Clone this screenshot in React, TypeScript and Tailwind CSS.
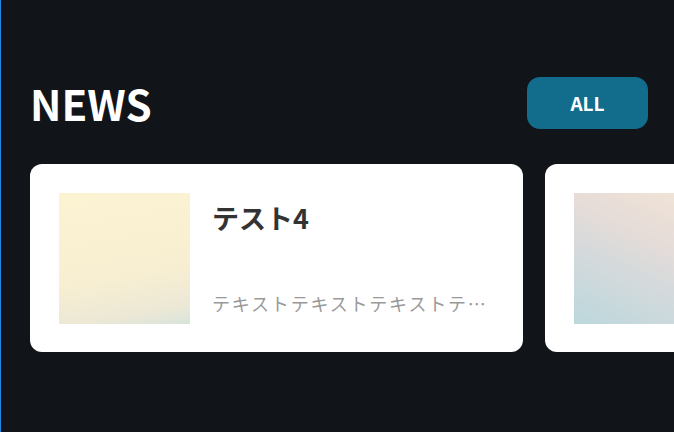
import React from 'react';

interface NewsItem {
  id: number;
  title: string;
  body: string;
  thumb: string;
}

const news: NewsItem[] = [
  {
    id: 4,
    title: 'テスト4',
    body: 'テキストテキストテキストテキストテキスト',
    thumb: 'bg-[linear-gradient(170deg,#fcf3d3_0%,#f8efd2_60%,#ece8d6_88%,#d7e4da_100%)]',
  },
  {
    id: 3,
    title: 'テスト3',
    body: 'テキストテキストテキストテキストテキスト',
    thumb: 'bg-[linear-gradient(205deg,#f3e5d6_0%,#e6dcd8_35%,#d3d9dc_62%,#bcd8dc_100%)]',
  },
];

const NewsCard: React.FC<{ item: NewsItem }> = ({ item }) => (
  <div className="w-[493px] h-[188px] shrink-0 bg-white rounded-[12px] p-[29px] flex gap-[22px]">
    <div className={`w-[131px] h-[131px] shrink-0 ${item.thumb}`} />
    <div className="flex-1 min-w-0 flex flex-col justify-between pt-[6px] pb-[6px]">
      <p className="text-[27px] font-bold leading-[1.4] text-[#333333]">{item.title}</p>
      <p className="text-[18px] leading-[1.5] tracking-[0.1em] text-[#999999] truncate">{item.body}</p>
    </div>
  </div>
);

export default function App() {
  return (
    <div
      className="w-[674px] h-[432px] overflow-hidden bg-[#111418] border-l border-[#1e88e5] pt-[77px]"
      style={{ fontFamily: '"Noto Sans CJK JP", "Noto Sans", sans-serif' }}
    >
      <div className="flex items-center justify-between pl-[29px] pr-[26px]">
        <h2 className="text-[42px] font-bold leading-none text-white">NEWS</h2>
        <button className="w-[121px] h-[52px] rounded-[13px] bg-[#126d8c] text-white text-[19px] font-bold">
          ALL
        </button>
      </div>
      <div className="flex gap-[22px] pl-[29px] mt-[35px]">
        {news.map(item => (
          <NewsCard key={item.id} item={item} />
        ))}
      </div>
    </div>
  );
}
